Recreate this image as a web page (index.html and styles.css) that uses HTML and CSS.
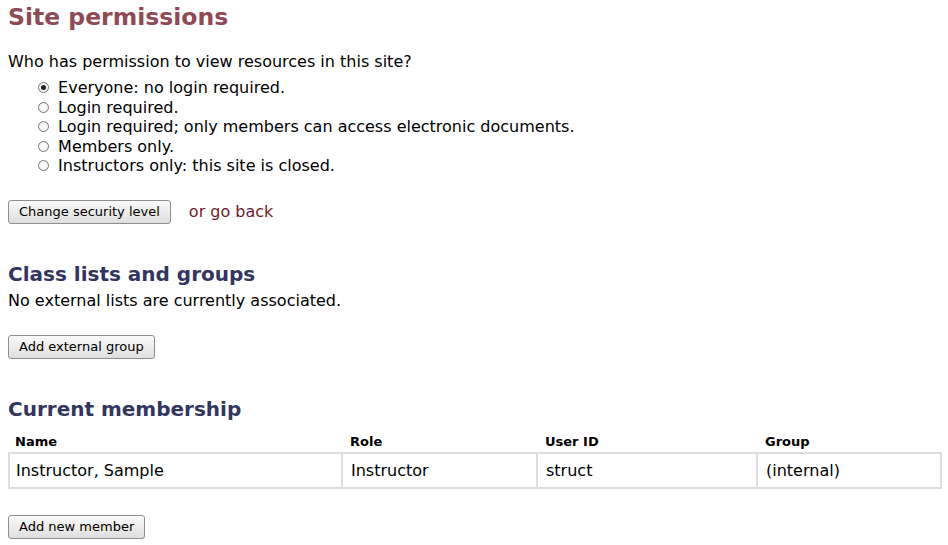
FILE: index.html
```html
<!DOCTYPE html>
<html>
<head>
<meta charset="utf-8">
<link rel="stylesheet" href="styles.css">
</head>
<body>
<h1 class="title">Site permissions</h1>
<p class="question">Who has permission to view resources in this site?</p>
<ul class="options">
  <li><label><input type="radio" name="level" checked> Everyone: no login required.</label></li>
  <li><label><input type="radio" name="level"> Login required.</label></li>
  <li><label><input type="radio" name="level"> Login required; only members can access electronic documents.</label></li>
  <li><label><input type="radio" name="level"> Members only.</label></li>
  <li><label><input type="radio" name="level"> Instructors only: this site is closed.</label></li>
</ul>
<div class="actions">
  <button class="btn">Change security level</button>
  <a class="back" href="#">or go back</a>
</div>

<h2 class="section">Class lists and groups</h2>
<p class="note">No external lists are currently associated.</p>
<div class="actions"><button class="btn">Add external group</button></div>

<h2 class="section">Current membership</h2>
<table class="members">
  <thead>
    <tr><th class="c1">Name</th><th class="c2">Role</th><th class="c3">User ID</th><th class="c4">Group</th></tr>
  </thead>
  <tbody>
    <tr><td class="c1">Instructor, Sample</td><td>Instructor</td><td>struct</td><td>(internal)</td></tr>
  </tbody>
</table>
<div class="actions last"><button class="btn">Add new member</button></div>
</body>
</html>
```

FILE: styles.css
```css
body {
  margin: 0;
  padding: 0 8px;
  font-family: "DejaVu Sans", sans-serif;
  font-size: 16px;
  color: #000;
  background: #fff;
}
.title {
  margin: 3px 0 0;
  font-size: 23.5px;
  line-height: 28px;
  color: #8e4a56;
  font-weight: bold;
}
.question {
  margin: 21px 0 0;
  line-height: 20px;
}
.options {
  list-style: none;
  margin: 6px 0 0;
  padding: 0 0 0 30px;
}
.options li {
  line-height: 19.5px;
}
.options input {
  appearance: none;
  -webkit-appearance: none;
  box-sizing: border-box;
  margin: 0 4px 0 0;
  width: 11px;
  height: 11px;
  border: 1px solid #777;
  border-radius: 50%;
  background: radial-gradient(#fff, #eee);
  vertical-align: 0;
  position: relative;
}
.options input:checked::after {
  content: "";
  position: absolute;
  left: 2px;
  top: 2px;
  width: 5px;
  height: 5px;
  border-radius: 50%;
  background: #222;
}
.actions {
  display: flex;
  align-items: center;
  gap: 18px;
  margin-top: 24px;
}
.actions.last {
  margin-top: 26px;
}
.btn {
  font-family: "DejaVu Sans", sans-serif;
  font-size: 13px;
  height: 24px;
  padding: 0 10px;
  border: 1px solid #8e8e8e;
  border-radius: 3px;
  background: linear-gradient(#fafafa, #dedede);
  color: #000;
}
.back {
  color: #6e1c2c;
  text-decoration: none;
}
.section {
  margin: 38px 0 0;
  font-size: 20px;
  line-height: 24px;
  color: #33355f;
}
.note {
  margin: 5px 0 0;
  line-height: 20px;
}
.members {
  width: calc(100% + 2px);
  margin-top: 11px;
  border-collapse: collapse;
}
.members th {
  text-align: left;
  font-size: 13px;
  padding: 2px 8px 3px;
}
.members td {
  border: 2px solid #ddd;
  padding: 7px 8px;
  font-size: 16px;
}
.members .c1 {
  width: 317px;
  padding-left: 6px;
}
.c2 { width: 179px; }
.c3 { width: 204px; }
```
